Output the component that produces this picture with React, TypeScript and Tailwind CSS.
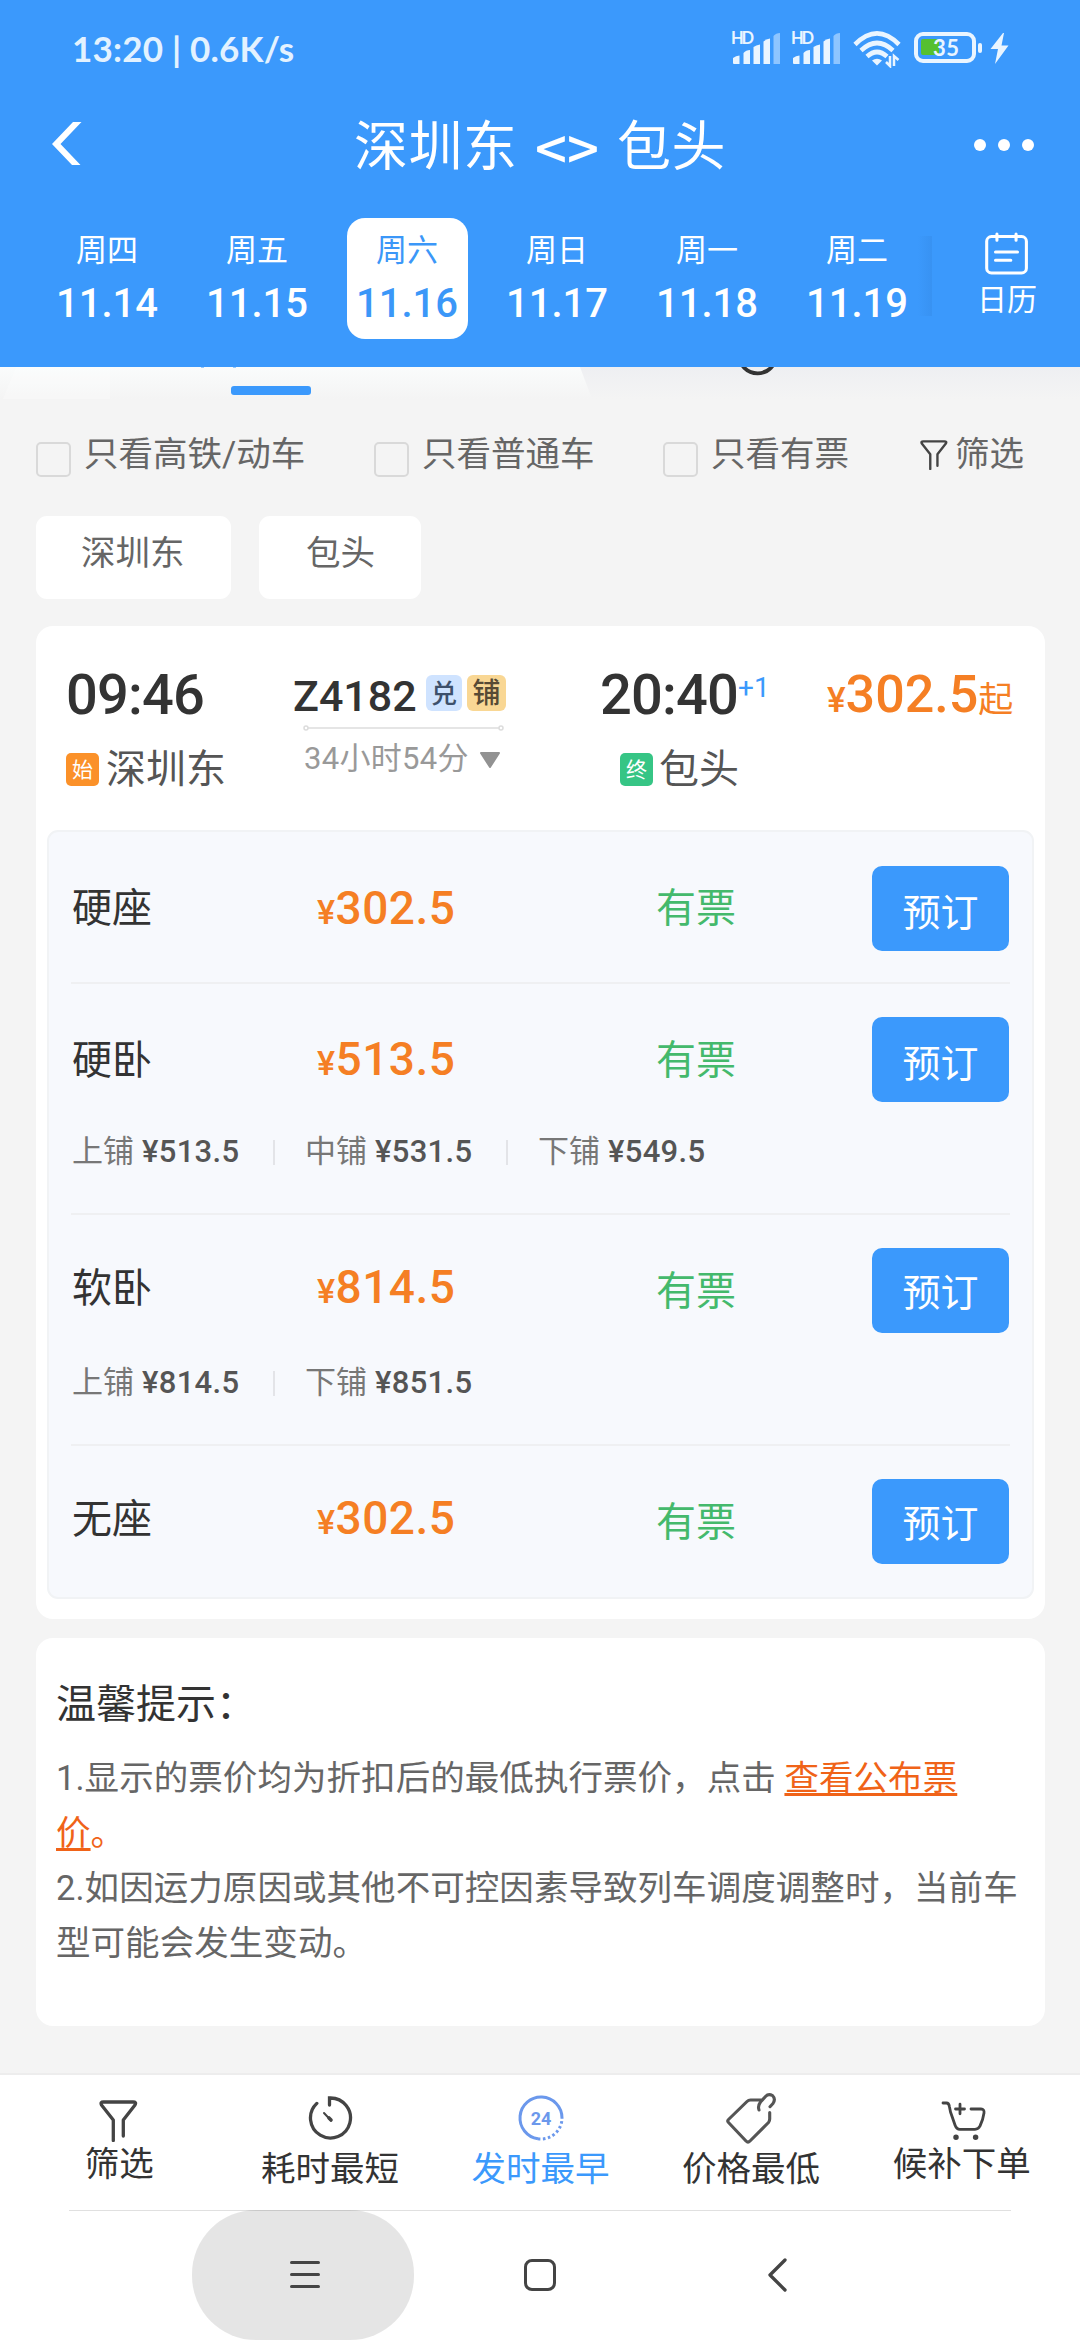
import React from "react";

const FONT = "font-[Roboto,'Noto_Sans_CJK_SC',sans-serif]";

function Signal() {
  return (
    <svg width="52" height="36" viewBox="0 0 52 36" className="shrink-0">
      <text x="1" y="14" fontSize="16.500" fontWeight="700" fill="#eaf5ff" fontFamily="Lato" textLength="23">HD</text>
      <g fill="#eaf5ff">
        <path d="M3 34V28Q6 25.500 9.500 25.500V34H4Q3 34 3 33Z" />
        <path d="M13.500 34V23Q16 20 20 20V34Z" />
        <path d="M23.500 34V17Q26 15 30 14.500V34Z" />
        <path d="M33.500 34V11.500Q36 9 40 8.500V34Z" />
      </g>
      <path d="M43.500 34V6Q46 3 50 3V34Z" fill="#8ec5ff" />
    </svg>
  );
}

function Wifi() {
  return (
    <svg width="48" height="38" viewBox="0 0 48 38" className="shrink-0">
      <g fill="none" stroke="#eaf5ff" strokeWidth="4.600">
        <path d="M2 14.500Q24 -7.500 46 14.500" />
        <path d="M8 20.500Q24 5.500 40 20.500" />
        <path d="M14 26.500Q24 17.500 34 26.500" />
      </g>
      <path d="M19 30.500Q24 27 29 30.500L24 35.500Z" fill="#eaf5ff" />
      <path d="M37 26V36L33 32M41 36V26L45.500 30" fill="none" stroke="#eaf5ff" strokeWidth="2.500" />
    </svg>
  );
}

function Battery() {
  return (
    <svg width="98" height="36" viewBox="0 0 98 36" className="shrink-0">
      <rect x="7" y="9" width="18" height="16" rx="2" fill="#55c02f" />
      <rect x="2" y="4" width="58" height="27" rx="7" fill="none" stroke="#eaf5ff" strokeWidth="4" />
      <rect x="64" y="13" width="4" height="10" rx="2" fill="#eaf5ff" />
      <text x="19" y="26" fontSize="22" fontWeight="700" fill="#eaf5ff" fontFamily="Lato" textLength="26">35</text>
      <path d="M89 3L76.500 19H84L81 34L94.500 15.500H87.500L90 3Z" fill="#eaf5ff" />
    </svg>
  );
}

function Funnel({ className, width }: { className?: string; width: number }) {
  return (
    <svg className={className} width={width} height={(width * 42) / 39} viewBox="0 0 39 42" fill="none" stroke="#444" strokeWidth="3.300" strokeLinecap="round" strokeLinejoin="round">
      <path d="M14.300 40.500V20L2.500 5Q1 2 4.500 2H34Q37.800 2 36 5L24.300 20V36" />
    </svg>
  );
}

const dates = [
  ["周四", "11.14"],
  ["周五", "11.15"],
  ["周六", "11.16"],
  ["周日", "11.17"],
  ["周一", "11.18"],
  ["周二", "11.19"],
];

function Header() {
  return (
    <header className="flex h-[367px] w-full flex-col bg-[#3b99fc] text-white">
      <div className="flex h-[96px] items-start">
        <div className="ml-[72px] mt-[30px] w-[658px] whitespace-pre font-[Lato] text-[35px] font-bold leading-[36px] tracking-[0.200px] text-[#e3f2ff]">13:20 | 0.6K/s</div>
        <div className="mt-[30px] flex">
          <Signal />
          <div className="ml-2 flex"><Signal /></div>
          <div className="ml-[11px] flex"><Wifi /></div>
          <div className="ml-[13px] flex"><Battery /></div>
        </div>
      </div>
      <div className="flex h-[122px] items-start">
        <svg width="32" height="46" viewBox="0 0 32 46" className="ml-[51px] mt-[25px]">
          <path d="M22 1H30.500L9.500 23L29.500 44H21L1 23Z" fill="#fff" />
        </svg>
        <div className="ml-[271px] mt-[22px] flex w-[602px] whitespace-nowrap text-[54px] leading-[60px]">
          <span className="w-[163px] tracking-[0.500px]">深圳东</span>
          <span className="w-[100px] text-center font-['Noto_Sans_CJK_SC'] text-[56px] font-medium leading-[55px]">&lt;&gt;</span>
          <span className="tracking-[0.500px]">包头</span>
        </div>
        <div className="ml-[18px] mt-[43px] flex gap-3">
          <i className="size-3 rounded-full bg-white" />
          <i className="size-3 rounded-full bg-white" />
          <i className="size-3 rounded-full bg-white" />
        </div>
      </div>
      <div className="flex">
        <div className="ml-[32px] flex w-[900px]">
          {dates.map(([d, n], i) => (
            <div key={n} className="flex w-[150px] shrink-0 justify-center">
              <div className={`flex h-[121px] w-[121px] flex-col items-center rounded-[18px] pt-[15px] ${i === 2 ? "bg-white text-[#3b97f8]" : ""}`}>
                <span className="text-[31px] leading-[36px]">{d}</span>
                <span className="mt-[15px] text-[40px] font-medium leading-[40px]">{n}</span>
              </div>
            </div>
          ))}
        </div>
        <div className="relative mt-[14px] flex h-[85px] w-[148px] flex-col pl-[51px]">
          <div className="absolute left-[-14px] top-1 h-[80px] w-[14px] bg-gradient-to-l from-[#3892f2] to-transparent" />
          <svg width="47" height="46" viewBox="0 0 47 46" fill="none" stroke="#fff" strokeWidth="3.200" strokeLinecap="round">
            <rect x="2.800" y="4.800" width="41.500" height="38" rx="5" />
            <path d="M13.500 2V8.500M33.500 2V8.500M12 21H35M12 29.500H28" />
          </svg>
          <span className="-ml-[6px] mt-[7px] text-[30px] leading-[34px]">日历</span>
        </div>
      </div>
    </header>
  );
}

function TabStrip() {
  return (
    <div className="flex h-[70px]">
      <svg width="1080" height="70" viewBox="0 0 1080 70">
        <defs>
          <linearGradient id="l" x1="0" y1="0" x2="0" y2="1">
            <stop offset="0" stopColor="#fafcfc" />
            <stop offset="1" stopColor="#f4f4f4" />
          </linearGradient>
          <linearGradient id="r" x1="0" y1="0" x2="0" y2="1">
            <stop offset="0" stopColor="#eeeff2" />
            <stop offset="1" stopColor="#f4f4f4" />
          </linearGradient>
        </defs>
        <rect width="1080" height="32" fill="url(#r)" />
        <path d="M0 0H580L592 32H0Z" fill="url(#l)" />
        <path d="M16 0H110V32H3Z" fill="#fff" fillOpacity="0.250" />
        <rect x="231" y="19" width="80" height="9" rx="3" fill="#3b99fc" />
        <circle cx="757.600" cy="-12.500" r="18.800" fill="none" stroke="#333" strokeWidth="3.800" />
        <path d="M201 0H204M233 0H236" stroke="#3b99fc" />
      </svg>
    </div>
  );
}

function Check({ label, className }: { label: string; className: string }) {
  return (
    <div className={`flex items-start ${className}`}>
      <span className="mt-[5px] h-[35px] w-[35px] shrink-0 rounded-[5px] border-2 border-[#d9d9d9]" />
      <span className="ml-[13px] whitespace-nowrap">{label}</span>
    </div>
  );
}

const seats = [
  { name: "硬座", price: "302.5", h: "h-[150px]", top: "mt-[57px]", pTop: "mt-[56px]", sTop: "mt-[57px]", btn: "mt-[33.5px] leading-[95px]", subs: [] },
  { name: "硬卧", price: "513.5", h: "h-[152px]", top: "mt-[57px]", pTop: "mt-[55px]", sTop: "mt-[57px]", btn: "mt-[33px] leading-[95px]", subs: [["上铺", "513.5"], ["中铺", "531.5"], ["下铺", "549.5"]] },
  { name: "软卧", price: "814.5", h: "h-[152px]", top: "mt-[54px]", pTop: "mt-[52px]", sTop: "mt-[57px]", btn: "mt-[33px] leading-[91px]", subs: [["上铺", "814.5"], ["下铺", "851.5"]] },
  { name: "无座", price: "302.5", h: "h-[151px]", top: "mt-[54px]", pTop: "mt-[52px]", sTop: "mt-[57px]", btn: "mt-[33px] leading-[91px]", subs: [] },
];

function Seats() {
  return (
    <div className="mx-[11px] rounded-[11px] border-2 border-[#f1f3f5] bg-[#f7f9fd] px-[22px]">
      {seats.map((s, i) => (
        <div key={s.name} className={i > 0 ? "border-t-2 border-[#eff0f2]" : ""}>
          <div className={`flex items-start ${s.h}`}>
            <span className={`w-[246px] pl-[1px] text-[40px] leading-[40px] text-[#333] ${s.top}`}>{s.name}</span>
            <span className={`w-[339px] text-[46px] font-medium leading-[40px] tracking-[0.500px] text-[#f57f24] ${s.pTop}`}>
              <span className="text-[34px]">¥</span>{s.price}
            </span>
            <span className={`w-[216px] text-[40px] leading-[40px] text-[#44b96c] ${s.sTop}`}>有票</span>
            <button className={`h-[85px] w-[137px] rounded-[10px] bg-[#3b99fc] text-center text-[38px] text-white ${s.btn}`}>预订</button>
          </div>
          {s.subs.length > 0 && (
            <div className="flex h-[77px] items-start">
              {s.subs.map(([n, p], k) => (
                <div key={n} className="flex w-[233px] pl-[1px] text-[31px] leading-[32px] text-[#777]">
                  <span className="w-[70px]">{n}</span>
                  <span className="w-[131px] text-[31px] font-medium tracking-[0.300px] text-[#555]">¥{p}</span>
                  {k < s.subs.length - 1 && <i className="mt-[4px] h-[25px] w-[2px] bg-[#e3e4e8]" />}
                </div>
              ))}
            </div>
          )}
        </div>
      ))}
    </div>
  );
}

function TrainCard() {
  return (
    <section className="mx-[36px] h-[993px] w-[1009px] rounded-[17px] bg-white">
      <div className="flex h-[204px] items-start pl-[30px]">
        <div className="w-[228px] pt-[41px]">
          <div className="text-[56px] font-medium leading-[56px] tracking-[-0.800px] text-[#333]">09:46</div>
          <div className="mt-[30px] flex">
            <span className="h-[33px] w-[33px] rounded-[5px] bg-[#fb9129] text-center text-[21px] leading-[34px] text-white">始</span>
            <span className="ml-[7px] text-[40px] leading-[33px] text-[#555]">深圳东</span>
          </div>
        </div>
        <div className="w-[306px] pt-[49px]">
          <div className="flex items-start">
            <span className="mt-[3px] w-[132px] -ml-[1px] mr-[1px] text-[43px] font-medium leading-[36px] text-[#333]">Z4182</span>
            <span className="h-[36px] w-[36px] rounded-[6px] bg-[#cfe3ff] text-center text-[26px] font-medium leading-[38px] text-[#3d506b]">兑</span>
            <span className="ml-[5px] h-[36px] w-[39px] rounded-[6px] bg-[#f9d794] text-center text-[28px] font-medium leading-[38px] text-[#574a35]">铺</span>
          </div>
          <svg width="202" height="6" viewBox="0 0 202 6" className="ml-[9px] mt-[11px]" fill="none" stroke="#dcdcdc" strokeWidth="1.500">
            <path d="M5 3H196" />
            <circle cx="3" cy="3" r="2" />
            <circle cx="198" cy="3" r="2" />
          </svg>
          <div className="ml-[10px] mt-[12px] flex h-8 items-start whitespace-nowrap text-[31px] leading-[32px] text-[#999]">
            <span className="w-[175px] tracking-[0.300px]">34小时54分</span>
            <svg width="22" height="18" viewBox="0 0 22 18" className="mt-[8px]">
              <path d="M2 2H20L11 16Z" fill="#929292" stroke="#929292" strokeLinejoin="round" strokeWidth="2" />
            </svg>
          </div>
        </div>
        <div className="w-[227px] pt-[41px]">
          <div className="flex items-start">
            <span className="w-[138px] text-[56px] font-medium leading-[56px] tracking-[-0.800px] text-[#333]">20:40</span>
            <span className="mt-[7px] text-[28px] leading-[28px] text-[#3b99fc]">+1</span>
          </div>
          <div className="mt-[30px] flex pl-[20px]">
            <span className="h-[33px] w-[33px] rounded-[5px] bg-[#36c585] text-center text-[21px] leading-[34px] text-white">终</span>
            <span className="ml-[6px] text-[40px] leading-[33px] text-[#555]">包头</span>
          </div>
        </div>
        <div className="whitespace-nowrap pt-[42px] text-[52px] font-medium leading-[53px] text-[#f57f24]">
          <span className="text-[35px]">¥</span>302.5<span className="text-[35px] font-normal">起</span>
        </div>
      </div>
      <Seats />
    </section>
  );
}

function Tips() {
  return (
    <section className="mx-[36px] mt-[19px] h-[388px] w-[1009px] rounded-[17px] bg-white px-[20px] pt-[46px]">
      <h2 className="text-[40px] leading-[41px] text-[#333]">温馨提示：</h2>
      <div className="mt-[26px] whitespace-nowrap text-[34.500px] leading-[55px] tracking-[0.060px] text-[#666]">
        <p>
          1.显示的票价均为折扣后的最低执行票价，点击{" "}
          <a className="text-[#f06318] underline decoration-[3px] underline-offset-[3px]">查看公布票</a>
        </p>
        <p className="text-[#f06318]">
          <a className="underline decoration-[3px] underline-offset-[3px]">价</a>。
        </p>
        <p>2.如因运力原因或其他不可控因素导致列车调度调整时，当前车</p>
        <p>型可能会发生变动。</p>
      </div>
    </section>
  );
}

function SortItem({ label, low, blue, children }: { label: string; low?: boolean; blue?: boolean; children: React.ReactNode }) {
  return (
    <div className={`flex flex-col items-center ${blue ? "text-[#3b99fc]" : "text-[#333]"}`}>
      <div className="flex h-[67px] w-full items-start justify-center">{children}</div>
      <span className={`text-[34.500px] leading-[44px] ${low ? "mt-[5px]" : ""}`}>{label}</span>
    </div>
  );
}

function BottomBar() {
  return (
    <div className="h-[137px] w-full border-t-2 border-[#ededed] bg-white">
      <div className="ml-[14px] grid w-[1053px] grid-cols-5">
        <SortItem label="筛选"><Funnel width={39} className="mt-[25px] -ml-[2px]" /></SortItem>
        <SortItem label="耗时最短" low>
          <svg width="46" height="46" viewBox="-23 -23 46 46" className="mt-[20px]" fill="none" stroke="#444" strokeWidth="3.300" strokeLinecap="round">
            <path d="M-0.500 -13V-20H0A20 20 0 1 1 -13.200 -14.600" />
            <path d="M-6 -5L1 2.500" strokeWidth="2" />
            <path d="M-1 0L1 2" strokeWidth="3.600" />
          </svg>
        </SortItem>
        <SortItem label="发时最早" low blue>
          <svg width="48" height="48" viewBox="-24 -24 48 48" className="mt-[19px] ml-[2px]" fill="none" stroke="#6b98ec" strokeWidth="3">
            <path d="M21 0A21 21 0 1 0 -3 20.800" />
            <path d="M-3 20.800A21 21 0 0 0 21 0" strokeDasharray="2.500 2.500" />
            <text x="0" y="7" textAnchor="middle" fontSize="18" fontWeight="700" fill="#6b98ec" stroke="none" fontFamily="Roboto">24</text>
          </svg>
        </SortItem>
        <SortItem label="价格最低" low>
          <svg width="52" height="52" viewBox="0 0 52 52" className="mt-[17px]" fill="none" stroke="#555" strokeWidth="3.100" strokeLinecap="round" strokeLinejoin="round">
            <path d="M36 8H25.500Q23.500 8 22 9.500L3.500 27.500Q2 29 3.500 30.500L21 49Q23 51 25 49L43.500 30.500Q44.700 29 44.700 27V20.500" />
            <path d="M34 18Q32.500 14 35.500 10L40.500 4.500Q43.500 1.200 47.500 3.500Q51 7 48 11.500L45 14.700" />
          </svg>
        </SortItem>
        <SortItem label="候补下单">
          <svg width="46" height="42" viewBox="0 0 46 42" className="mt-[25px] ml-[5px]" fill="none" stroke="#444" strokeWidth="2.800" strokeLinecap="round" strokeLinejoin="round">
            <path d="M2 3H5.500Q8 3 8.500 7L9.500 12L14 25Q15.500 29.300 19 29.300H34Q37.500 29.300 39 26Q42 20 43 13Q43.500 9 40 9H30" />
            <path d="M14.500 9H23.500M19 4.200V13.800" />
            <circle cx="15" cy="37.300" r="1.500" strokeWidth="2.500" fill="#444" />
            <circle cx="34.600" cy="37.300" r="1.500" strokeWidth="2.500" fill="#444" />
          </svg>
        </SortItem>
      </div>
    </div>
  );
}

function SystemNav() {
  return (
    <nav className="h-[130px] w-full bg-white">
      <div className="mx-[69px] h-px bg-[#e0e0e0]" />
      <div className="-mt-px flex h-[130px] items-center">
        <div className="ml-[192px] flex h-[130px] w-[222px] items-center justify-center rounded-[64px] bg-black/10">
          <div className="mr-[-4px] flex w-[30px] flex-col gap-[9px] pb-[1px]">
            <i className="h-[3px] rounded bg-[#444]" />
            <i className="h-[3px] rounded bg-[#444]" />
            <i className="h-[3px] rounded bg-[#444]" />
          </div>
        </div>
        <div className="ml-[110px] h-[32px] w-[32px] rounded-[8px] border-[3.500px] border-[#444]" />
        <svg width="22" height="34" viewBox="0 0 22 34" className="ml-[211px]" fill="none" stroke="#444" strokeWidth="3.300" strokeLinecap="round" strokeLinejoin="round">
          <path d="M18 2L3 17L18 32" />
        </svg>
      </div>
    </nav>
  );
}

export default function App() {
  return (
    <div className={`flex h-[2340px] w-[1080px] flex-col overflow-hidden bg-[#f4f4f4] ${FONT}`}>
      <Header />
      <TabStrip />
      <div className="flex h-[79px] items-start pl-[36px] text-[34.500px] leading-[34px] text-[#666]">
        <Check label="只看高铁/动车" className="w-[338px]" />
        <Check label="只看普通车" className="w-[289px]" />
        <Check label="只看有票" className="w-[257px]" />
        <Funnel width={28} className="mt-[3px] shrink-0" />
        <span className="ml-[7px]">筛选</span>
      </div>
      <div className="mb-[27px] ml-[36px] flex gap-[28px] text-[34.500px] leading-[74px] text-[#666]">
        <span className="h-[83px] w-[195px] rounded-[11px] bg-white pl-[45px]">深圳东</span>
        <span className="h-[83px] w-[162px] rounded-[11px] bg-white pl-[47px]">包头</span>
      </div>
      <TrainCard />
      <Tips />
      <div className="h-[47px] shrink-0" />
      <BottomBar />
      <SystemNav />
    </div>
  );
}
